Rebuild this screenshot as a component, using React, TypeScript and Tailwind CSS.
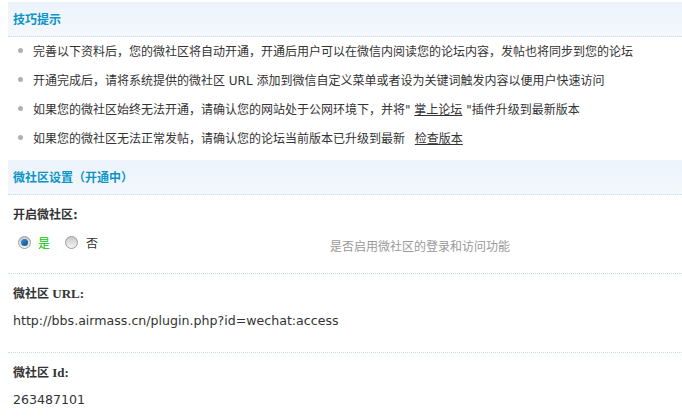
const CJK = "font-['DejaVu_Sans','Noto_Sans_CJK_SC',sans-serif]";

const TIPS: React.ReactNode[] = [
  "完善以下资料后，您的微社区将自动开通，开通后用户可以在微信内阅读您的论坛内容，发帖也将同步到您的论坛",
  "开通完成后，请将系统提供的微社区 URL 添加到微信自定义菜单或者设为关键词触发内容以便用户快速访问",
  <>
    如果您的微社区始终无法开通，请确认您的网站处于公网环境下，并将"{" "}
    <a className="underline">掌上论坛</a> "插件升级到最新版本
  </>,
  <>
    如果您的微社区无法正常发帖，请确认您的论坛当前版本已升级到最新{"  "}
    <a className="underline ml-[6px]">检查版本</a>
  </>,
];

function Header({ title }: { title: string }) {
  return (
    <div className="h-[35px] bg-gradient-to-b from-[#ecf3fb] to-[#f4f8fd] border-b border-dotted border-[#c4dcef] pl-[5px] flex items-center">
      <span className="text-[12px] font-bold text-[#0b94c8] font-['Noto_Sans_CJK_SC',sans-serif]">
        {title}
      </span>
    </div>
  );
}

function Radio({ checked }: { checked?: boolean }) {
  return (
    <span className="w-[13px] h-[13px] rounded-full border border-[#9a9a9a] bg-gradient-to-b from-[#c9c9c9] to-[#f5f5f5] flex items-center justify-center">
      {checked && (
        <span className="w-[7px] h-[7px] rounded-full bg-gradient-to-br from-[#3d8fd6] to-[#0c4f8f]" />
      )}
    </span>
  );
}

function Field({
  label,
  latin,
  children,
  last,
}: {
  label: string;
  latin?: string;
  children: React.ReactNode;
  last?: boolean;
}) {
  return (
    <div className={`pt-[4px] ${last ? "" : "pb-[16px] border-b border-dotted border-[#c4dcef]"}`}>
      <div className="h-[29px] leading-[29px] pl-[5px] text-[12px] font-bold text-[#333]">
        <span className="font-['Noto_Sans_CJK_SC',sans-serif]">{label}</span>
        {latin && <span className="font-['Liberation_Serif',serif] text-[13px]"> {latin}</span>}
        {!latin && <span>:</span>}
      </div>
      <div className="h-[29px] pl-[5px] flex items-center text-[12px] text-[#333]">{children}</div>
    </div>
  );
}

export default function App() {
  return (
    <div className={`w-[682px] h-[418px] bg-white pt-[2px] pl-[8px] overflow-hidden ${CJK}`}>
      <Header title="技巧提示" />
      <ul>
        {TIPS.map((t, i) => (
          <li key={i} className="h-[29px] flex items-center text-[12px] text-[#333] whitespace-nowrap">
            <span className="w-[5px] h-[5px] rounded-full bg-[#b0b0b0] ml-[10px] mr-[10px] -mt-[2px]" />
            <span className="font-['DejaVu_Sans','Noto_Sans_CJK_SC',sans-serif]">{t}</span>
          </li>
        ))}
      </ul>
      <div className="mt-[7px]">
        <Header title="微社区设置（开通中）" />
      </div>
      <Field label="开启微社区">
        <div className="w-[317px] flex items-center">
          <span className="ml-[5px]">
            <Radio checked />
          </span>
          <span className="ml-[7px] text-[#00c800] font-['Noto_Sans_CJK_SC',sans-serif]">是</span>
          <span className="ml-[15px]">
            <Radio />
          </span>
          <span className="ml-[8px] font-['Noto_Sans_CJK_SC',sans-serif]">否</span>
        </div>
        <span className="text-[#999] mt-[6px] font-['Noto_Sans_CJK_SC',sans-serif]">是否启用微社区的登录和访问功能</span>
      </Field>
      <Field label="微社区" latin="URL:">
        <span className="font-['DejaVu_Sans',sans-serif] text-[12.6px]">http://bbs.airmass.cn/plugin.php?id=wechat:access</span>
      </Field>
      <Field label="微社区" latin="Id:" last>
        <span className="font-['DejaVu_Sans',sans-serif] text-[12.6px]">263487101</span>
      </Field>
    </div>
  );
}
